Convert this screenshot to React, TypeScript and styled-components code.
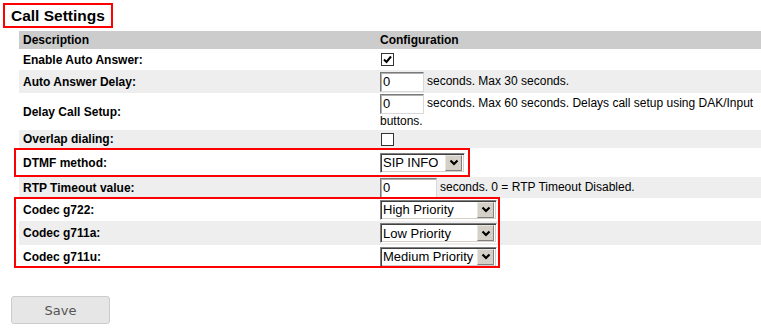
import React from "react";
import styled, { createGlobalStyle } from "styled-components";

const Global = createGlobalStyle`
  html, body { margin: 0; padding: 0; background: #fff; overflow: hidden; }
  body { font-family: "Liberation Sans", Arial, sans-serif; color: #000; }
`;

const Page = styled.div`
  padding: 3px 0 0 3px;
`;

const TitleBox = styled.h2`
  display: inline-block;
  margin: 0;
  border: 2px solid #f00;
  padding: 0 6px;
  height: 21px;
  line-height: 21px;
  font-size: 15.5px;
  font-weight: bold;
`;

const Table = styled.div`
  margin: 3px 0 0 16px;
  display: flex;
  flex-direction: column;
`;

const Row = styled.div<{ $shade?: "head" | "alt" | "none"; $h: number }>`
  display: grid;
  grid-template-columns: 357px 1fr;
  align-items: center;
  min-height: ${(p) => p.$h}px;
  background: ${(p) =>
    p.$shade === "head" ? "#cccccc" : p.$shade === "alt" ? "#eeeeee" : "#ffffff"};
`;

const Label = styled.div`
  padding-left: 4px;
  font-size: 12px;
  font-weight: bold;
`;

const Config = styled.div`
  padding-left: 4px;
  font-size: 12px;
  line-height: 15px;
`;

const Group = styled.div<{ $w: number; $top: number; $bottom: number }>`
  position: relative;
  &::after {
    content: "";
    position: absolute;
    left: -5px;
    top: ${(p) => p.$top}px;
    bottom: ${(p) => p.$bottom}px;
    width: ${(p) => p.$w}px;
    box-sizing: border-box;
    border: 2px solid #f00;
    pointer-events: none;
  }
`;

const Check = styled.span`
  display: inline-block;
  box-sizing: border-box;
  width: 13px;
  height: 13px;
  margin-left: 1px;
  border: 1px solid #333;
  background: #fff;
  vertical-align: middle;
  svg { display: block; }
`;

const TextInput = styled.span<{ $w: number }>`
  display: inline-block;
  box-sizing: border-box;
  width: ${(p) => p.$w}px;
  height: 20px;
  border: 1px solid;
  border-color: #7a7a7a #d8d8d8 #d8d8d8 #7a7a7a;
  box-shadow: inset 1px 1px 0 #b0b0b0;
  background: #fff;
  font-size: 13px;
  line-height: 18px;
  padding-left: 2px;
  vertical-align: middle;
  margin-right: 3px;
`;

const Select = styled.div<{ $w: number }>`
  display: flex;
  align-items: center;
  box-sizing: border-box;
  width: ${(p) => p.$w}px;
  height: 20px;
  border: 1px solid;
  border-color: #808080 #ffffff #ffffff #808080;
  box-shadow: inset 1px 1px 0 #404040, inset -1px -1px 0 #d4d0c8;
  background: #fff;
  font-size: 13px;
  padding: 0 2px 0 2px;
`;

const SelectValue = styled.span`
  flex: 1;
  white-space: nowrap;
  overflow: hidden;
`;

const Arrow = styled.span`
  display: flex;
  align-items: center;
  justify-content: center;
  box-sizing: border-box;
  width: 17px;
  height: 16px;
  background: #d4d0c8;
  border: 1px solid;
  border-color: #e8e6e0 #808080 #808080 #e8e6e0;
`;

const SaveButton = styled.button`
  margin: 28px 0 0 8px;
  width: 99px;
  height: 28px;
  border: 1px solid #cccccc;
  border-radius: 3px;
  background: #e6e6e6;
  color: #555;
  font-family: "DejaVu Sans", Verdana, sans-serif;
  font-size: 13px;
  cursor: pointer;
`;

const Chevron = () => (
  <svg width="10" height="7" viewBox="0 0 10 7">
    <path d="M1.5 1.5 L5 5 L8.5 1.5" fill="none" stroke="#000" strokeWidth="2.2" />
  </svg>
);

const Tick = () => (
  <svg width="11" height="11" viewBox="0 0 11 11">
    <path d="M2 5.5 L4.5 8 L9 2.5" fill="none" stroke="#000" strokeWidth="2" />
  </svg>
);

const Dropdown = ({ value, w }: { value: string; w: number }) => (
  <Select $w={w}>
    <SelectValue>{value}</SelectValue>
    <Arrow>
      <Chevron />
    </Arrow>
  </Select>
);

export default function App() {
  return (
    <Page>
      <Global />
      <TitleBox>Call Settings</TitleBox>
      <Table>
        <Row $shade="head" $h={18}>
          <Label>Description</Label>
          <Config>
            <b>Configuration</b>
          </Config>
        </Row>
        <Row $h={21}>
          <Label>Enable Auto Answer:</Label>
          <Config>
            <Check>
              <Tick />
            </Check>
          </Config>
        </Row>
        <Row $shade="alt" $h={23}>
          <Label>Auto Answer Delay:</Label>
          <Config>
            <TextInput $w={44}>0</TextInput>
            seconds. Max 30 seconds.
          </Config>
        </Row>
        <Row $h={37}>
          <Label>Delay Call Setup:</Label>
          <Config>
            <TextInput $w={44}>0</TextInput>
            seconds. Max 60 seconds. Delays call setup using DAK/Input
            <br />
            buttons.
          </Config>
        </Row>
        <Row $shade="alt" $h={18}>
          <Label>Overlap dialing:</Label>
          <Config>
            <Check />
          </Config>
        </Row>
        <Group $w={456} $top={0} $bottom={0}>
          <Row $h={29}>
            <Label>DTMF method:</Label>
            <Config>
              <Dropdown value="SIP INFO" w={85} />
            </Config>
          </Row>
        </Group>
        <Row $shade="alt" $h={21}>
          <Label>RTP Timeout value:</Label>
          <Config>
            <TextInput $w={57}>0</TextInput>
            seconds. 0 = RTP Timeout Disabled.
          </Config>
        </Row>
        <Group $w={486} $top={-1} $bottom={0}>
          <Row $h={23}>
            <Label>Codec g722:</Label>
            <Config>
              <Dropdown value="High Priority" w={117} />
            </Config>
          </Row>
          <Row $shade="alt" $h={24}>
            <Label>Codec g711a:</Label>
            <Config>
              <Dropdown value="Low Priority" w={117} />
            </Config>
          </Row>
          <Row $h={23}>
            <Label>Codec g711u:</Label>
            <Config>
              <Dropdown value="Medium Priority" w={117} />
            </Config>
          </Row>
        </Group>
      </Table>
      <SaveButton>Save</SaveButton>
    </Page>
  );
}
